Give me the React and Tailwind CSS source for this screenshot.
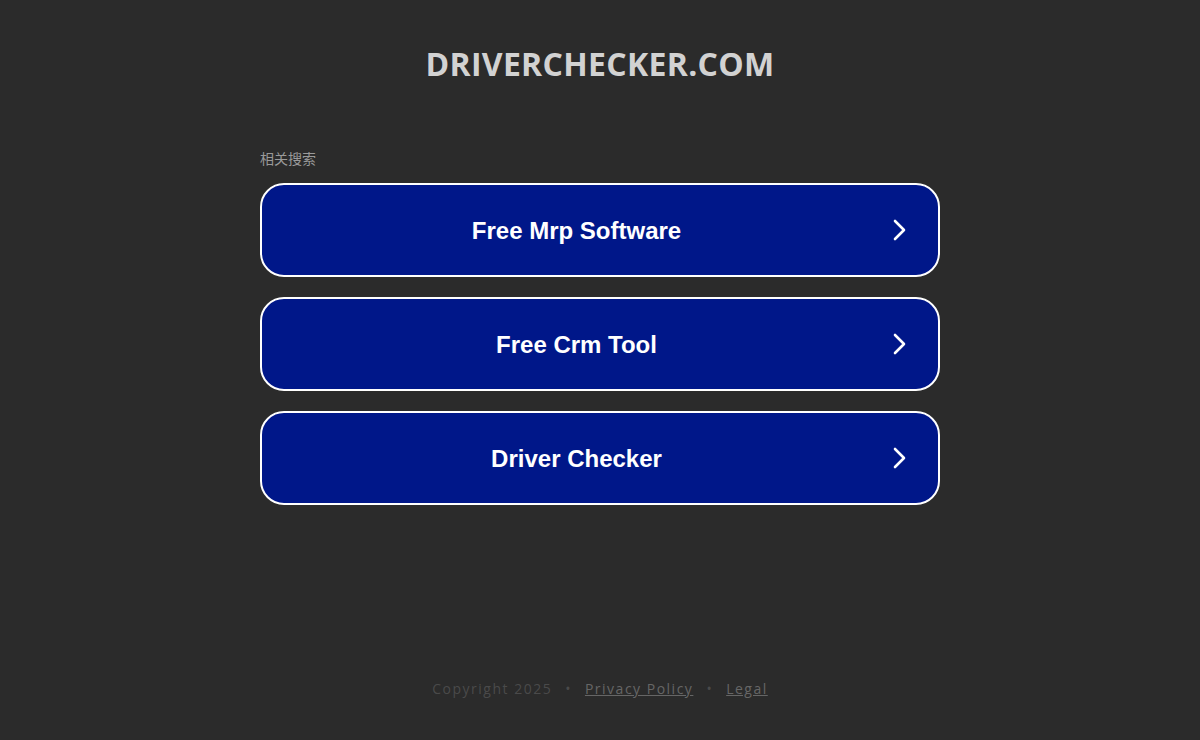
import React from "react";

const links = ["Free Mrp Software", "Free Crm Tool", "Driver Checker"];

const Chevron = () => (
  <svg width="16" height="24" viewBox="0 0 16 24" fill="none" stroke="white" strokeWidth="2.6" strokeLinecap="round" strokeLinejoin="round">
    <path d="M4 3 L13 12 L4 21" />
  </svg>
);

export default function App() {
  return (
    <div className="min-h-[740px] w-full bg-[#2b2b2b] flex flex-col items-center">
      {/* Domain title */}
      <h1 className="mt-[44px] text-[32px] leading-[40px] tracking-[0.3px] font-bold text-[#d2d2d2] font-['Open_Sans','Liberation_Sans',sans-serif]">
        DRIVERCHECKER.COM
      </h1>

      {/* Related searches */}
      <div className="mt-[66px] w-[680px]">
        <div className="text-[14px] leading-[18px] text-[#9a9a9a] font-['Liberation_Sans','Noto_Sans_CJK_SC',sans-serif]">
          相关搜索
        </div>
        <div className="mt-[15px] flex flex-col gap-[20px]">
          {links.map((t) => (
            <a
              key={t}
              href="#"
              className="h-[94px] rounded-[24px] border-2 border-white bg-[#001789] flex items-center pr-[31px]"
            >
              <span className="flex-1 pt-[2px] text-center text-white text-[24px] font-bold font-['Liberation_Sans',Arial,sans-serif]">
                {t}
              </span>
              <Chevron />
            </a>
          ))}
        </div>
      </div>

      {/* Footer */}
      <div className="mt-[173px] flex items-center gap-[13px] text-[14px] tracking-[1.5px] text-[#4a4a4a] font-['Open_Sans','Liberation_Sans',sans-serif]">
        <span>Copyright 2025</span>
        <span>•</span>
        <a href="#" className="underline text-[#666666]">Privacy Policy</a>
        <span>•</span>
        <a href="#" className="underline text-[#666666]">Legal</a>
      </div>
    </div>
  );
}
